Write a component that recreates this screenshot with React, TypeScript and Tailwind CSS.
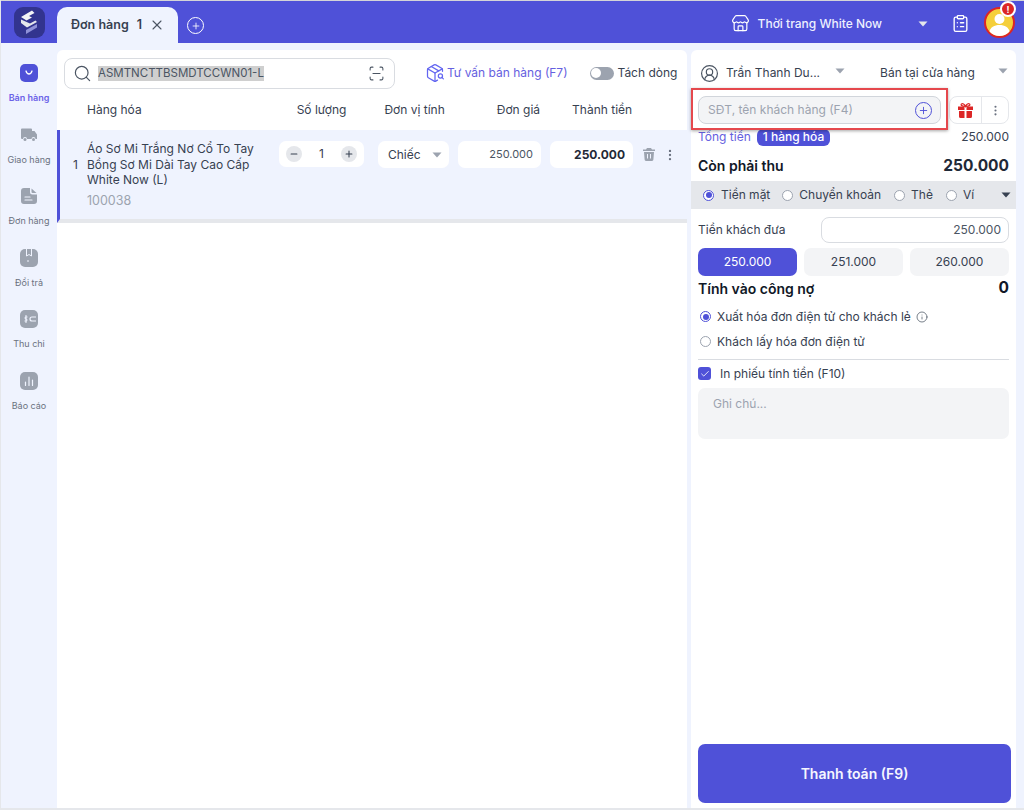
import { FC, ReactNode } from 'react';
import { Plus, X, Search, ScanLine, Minus, EllipsisVertical, Store, ClipboardList, CircleUserRound, PackageSearch, Info, Check } from 'lucide-react';

const Caret: FC<{ className?: string }> = ({ className }) => (
    <svg width="10" height="6" viewBox="0 0 10 6" className={className}>
        <path d="M0.5 0.5h9L5 5.5z" fill="currentColor" />
    </svg>
);

const Radio: FC<{ on?: boolean }> = ({ on }) => (
    <span className={`flex h-[11px] w-[11px] shrink-0 items-center justify-center rounded-full border bg-white ${on ? 'border-[#4f51d8]' : 'border-[#9ca3af]'}`}>
        {on && <span className="h-[6px] w-[6px] rounded-full bg-[#4f51d8]" />}
    </span>
);

const NavItem: FC<{ label: string; active?: boolean; children: ReactNode }> = ({ label, active, children }) => (
    <div className="flex h-[61.5px] flex-col items-center">
        <div className={`flex h-[18px] w-[18px] items-center justify-center rounded-[5px] ${active ? 'bg-[#4f51d8]' : 'bg-[#9ca3af]'}`}>
            {children}
        </div>
        <span className={`mt-[10px] text-[9px] leading-[12px] ${active ? 'font-semibold text-[#6b62e8]' : 'text-[#6b7280]'}`}>{label}</span>
    </div>
);

const Sidebar: FC = () => (
    <aside className="w-[56px] shrink-0 pt-[14px]">
        <NavItem label="Bán hàng" active>
            <svg width="10" height="6" viewBox="0 0 10 6"><path d="M2 1c.6 2 1.700 3 3 3s2.400-1 3-3" fill="none" stroke="#fff" strokeWidth="1.300" strokeLinecap="round" /></svg>
        </NavItem>
        <div className="flex h-[61.5px] flex-col items-center">
            <svg width="18" height="18" viewBox="0 0 18 18"><path d="M1 3.500a1 1 0 0 1 1-1h9a1 1 0 0 1 1 1V5h2.500L17 8.500V13h-1.500a2 2 0 0 0-4 0h-4.500a2 2 0 0 0-4 0H2a1 1 0 0 1-1-1z" fill="#9ca3af" /><circle cx="5" cy="13.500" r="1.500" fill="#9ca3af" /><circle cx="13.500" cy="13.500" r="1.500" fill="#9ca3af" /></svg>
            <span className="mt-[10px] text-[9px] leading-[12px] text-[#6b7280]">Giao hàng</span>
        </div>
        <div className="flex h-[61.5px] flex-col items-center">
            <svg width="18" height="18" viewBox="0 0 18 18"><path d="M4 1h6L10 5a2.500 2.500 0 0 0 2.500 2.500H17V14a3 3 0 0 1-3 3H4a3 3 0 0 1-3-3V4a3 3 0 0 1 3-3z" fill="#9ca3af" /><path d="M11.500 1.500L16.500 6h-4a1 1 0 0 1-1-1z" fill="#9ca3af" /><path d="M5 10h5M5 13h7" stroke="#eff3fe" strokeWidth="1.200" strokeLinecap="round" /></svg>
            <span className="mt-[10px] text-[9px] leading-[12px] text-[#6b7280]">Đơn hàng</span>
        </div>
        <NavItem label="Đổi trả">
            <svg width="18" height="18" viewBox="0 0 18 18"><path d="M6.500 0v7l2.500-1.500L11.500 7V0" fill="none" stroke="#eff3fe" strokeWidth="1" /><path d="M7 12h2" stroke="#eff3fe" strokeWidth="1.200" /></svg>
        </NavItem>
        <NavItem label="Thu chi">
            <svg width="18" height="18" viewBox="0 0 18 18"><path d="M6 5v8M7.500 7H5.200v2h1.600v2H4.500" fill="none" stroke="#eff3fe" strokeWidth="1" /><path d="M16 7h-4a2 2 0 0 0 0 4h4" fill="none" stroke="#eff3fe" strokeWidth="1.200" /></svg>
        </NavItem>
        <NavItem label="Báo cáo">
            <svg width="18" height="18" viewBox="0 0 18 18"><path d="M5.500 10v3.500M9 5v8.500M12.500 8v5.500" stroke="#eff3fe" strokeWidth="1.200" strokeLinecap="round" /></svg>
        </NavItem>
    </aside>
);

const Header: FC = () => (
    <header className="flex h-[43px] shrink-0 items-end border-t border-[#d4d4d8] bg-[#4f51d8]">
        <div className="flex h-[42px] w-[56px] shrink-0 items-center justify-center">
            <div className="flex h-[31px] w-[31px] items-center justify-center rounded-[9px] bg-[#32348f]">
                <svg width="20" height="26" viewBox="0 0 20 26">
                    <path d="M13 1.500L2 8l5.500 3.500 5.500-3-3-1.500L15.500 4z" fill="#f3f4f6" />
                    <path d="M2 10.500l9 4 5.500-3L18 13l-10 5.500L2 14z" fill="#e5e7eb" />
                    <path d="M18 15v3.500L7 25v-4z" fill="#8f91d8" />
                </svg>
            </div>
        </div>
        <div className="flex h-[36px] w-[121px] items-center rounded-t-[10px] bg-[#eff3fe] pl-[14px] text-[12.500px] font-semibold text-[#374151]">
            <span>Đơn hàng</span>
            <span className="ml-[8px]">1</span>
            <X size={16} strokeWidth={1.600} className="ml-[7px] text-[#4b5563]" />
        </div>
        <div className="mb-[9px] ml-[9px] flex h-[17px] w-[17px] items-center justify-center rounded-full border-[1.500px] border-white">
            <Plus size={10} strokeWidth={2} className="text-white" />
        </div>
        <div className="mb-[10px] ml-auto flex items-center text-white">
            <Store size={19} strokeWidth={1.500} />
            <span className="ml-[8px] text-[12px] font-medium leading-[16px] text-[#eef0ff]">Thời trang White Now</span>
            <Caret className="ml-[36px] text-[#e5e7eb]" />
            <ClipboardList size={19} strokeWidth={1.700} className="ml-[23px]" />
        </div>
        <div className="relative mb-[5px] ml-[14px] mr-[9px] flex h-[31px] w-[31px] items-center justify-center overflow-visible rounded-full border-2 border-[#dc2626] bg-[#f5cf3a]">
            <svg width="27" height="27" viewBox="0 0 27 27" className="rounded-full">
                <circle cx="13.500" cy="10" r="5" fill="#fff" />
                <path d="M3 24c1-6 5.500-8 10.500-8s9.500 2 10.500 8l-4 3H7z" fill="#fff" />
            </svg>
            <span className="absolute -right-[3px] -top-[8px] flex h-[16px] w-[16px] items-center justify-center rounded-full border-2 border-white bg-[#dc2626] text-[9px] font-bold leading-none text-white">!</span>
        </div>
    </header>
);

const OrderPanel: FC = () => (
    <main className="flex w-[630px] shrink-0 flex-col rounded-t-[6px] bg-white">
        <div className="flex h-[43px] items-center pl-[7px] pt-[3px]">
            <div className="flex h-[31px] w-[331px] items-center rounded-[8px] border border-[#d9dce1] pl-[8px] pr-[9px]">
                <Search size={19} strokeWidth={1.500} className="text-[#4b5563]" />
                <span className="ml-[6px] bg-[#cfcfcf] text-[11.500px] leading-[15px] text-[#4b5563]">ASMTNCTTBSMDTCCWN01-L</span>
                <ScanLine size={17} strokeWidth={1.500} className="ml-auto text-[#4b5563]" />
            </div>
            <PackageSearch size={20} strokeWidth={1.500} className="ml-[30px] text-[#6366f1]" />
            <span className="ml-[2px] text-[12px] text-[#6560e0]">Tư vấn bán hàng (F7)</span>
            <span className="ml-[22px] flex h-[13px] w-[24px] items-center rounded-full bg-[#9ca3af] pl-[1.500px]">
                <span className="h-[10px] w-[10px] rounded-full bg-white" />
            </span>
            <span className="ml-[4px] text-[12px] text-[#374151]">Tách dòng</span>
        </div>
        <div className="flex h-[37px] items-center pb-[3px] text-[12px] text-[#374151]">
            <span className="ml-[30px]">Hàng hóa</span>
            <span className="ml-[155px]">Số lượng</span>
            <span className="ml-[38px]">Đơn vị tính</span>
            <span className="ml-[52px]">Đơn giá</span>
            <span className="ml-[32px]">Thành tiền</span>
        </div>
        <div className="flex h-[93px] items-start border-b-4 border-l-[3px] border-b-[#e5e7eb] border-l-[#4f51d8] bg-[#eff3fe] pt-[11px]">
            <span className="mt-[15px] ml-[13px] w-[14px] text-[12px] text-[#374151]">1</span>
            <div className="w-[192px]">
                <p className="text-[12px] leading-[15.500px] text-[#374151]">Áo Sơ Mi Trắng Nơ Cổ To Tay<br />Bồng Sơ Mi Dài Tay Cao Cấp<br />White Now (L)</p>
                <p className="mt-[5px] text-[12.500px] leading-[16px] text-[#9ca3af]">100038</p>
            </div>
            <div className="flex h-[26px] w-[85px] items-center justify-between rounded-[7px] bg-white px-[7px] text-[12px] text-[#374151]">
                <span className="flex h-[16px] w-[16px] items-center justify-center rounded-full bg-[#e5e7eb]"><Minus size={10} strokeWidth={2.500} /></span>
                <span>1</span>
                <span className="flex h-[16px] w-[16px] items-center justify-center rounded-full bg-[#e5e7eb]"><Plus size={10} strokeWidth={2.500} /></span>
            </div>
            <div className="ml-[14px] flex h-[27px] w-[71px] items-center rounded-[7px] bg-white pl-[10px] pr-[7px] text-[12px] text-[#374151]">
                <span>Chiếc</span>
                <Caret className="ml-auto text-[#9ca3af]" />
            </div>
            <div className="ml-[9px] flex h-[27px] w-[83px] items-center justify-end rounded-[7px] bg-white pr-[8px] text-[11px] text-[#4b5563]">250.000</div>
            <div className="ml-[9px] flex h-[27px] w-[83px] items-center justify-end rounded-[7px] bg-white pr-[8px] text-[12px] font-bold text-[#1f2937]">250.000</div>
            <svg width="12" height="13" viewBox="0 0 12 13" className="ml-[10px] mt-[7px]">
                <path d="M4 0h4l1 1.500h3V3H0V1.500h3zM1 4h10l-.6 7.500A1.500 1.500 0 0 1 9 13H3a1.500 1.500 0 0 1-1.400-1.500z" fill="#9ca3af" />
                <path d="M4.500 6v4.500M7.500 6v4.500" stroke="#eff3fe" strokeWidth="1" />
            </svg>
            <EllipsisVertical size={14} strokeWidth={2} className="ml-[8px] mt-[7px] text-[#6b7280]" />
        </div>
    </main>
);

const PayPanel: FC = () => (
    <section className="relative ml-[4px] flex w-[325px] shrink-0 flex-col rounded-t-[6px] bg-white text-[12px] text-[#374151]">
        <div className="flex h-[40px] items-center pl-[9px] pr-[8px] pt-[6px]">
            <CircleUserRound size={19} strokeWidth={1.500} className="text-[#4b5563]" />
            <span className="ml-[7px]">Trần Thanh Du...</span>
            <Caret className="ml-[15px] -translate-y-[2px] text-[#9ca3af]" />
            <span className="ml-[35px]">Bán tại cửa hàng</span>
            <Caret className="ml-auto -translate-y-[2px] text-[#9ca3af]" />
        </div>
        <div className="flex h-[39px] items-center pl-[7px] pr-[7px] pt-[1px]">
            <div className="flex h-[28px] w-[243px] items-center rounded-[8px] border border-[#d1d5db] bg-[#f3f4f6] pl-[9px] pr-[8px] text-[#9ca3af]">
                <span>SĐT, tên khách hàng (F4)</span>
                <span className="ml-auto flex h-[17px] w-[17px] items-center justify-center rounded-full border-[1.500px] border-[#4f51d8]">
                    <Plus size={11} strokeWidth={2} className="text-[#4f51d8]" />
                </span>
            </div>
            <div className="ml-[8px] flex h-[28px] w-[60px] items-center rounded-[8px] border border-[#e5e7eb]">
                <span className="flex h-full w-[32px] items-center justify-center border-r border-[#e5e7eb]">
                    <svg width="15" height="15" viewBox="0 0 15 15">
                        <path d="M0 3.500h15v3.500H0zM1 8h13v5.500a1.500 1.500 0 0 1-1.500 1.500h-10A1.500 1.500 0 0 1 1 13.500z" fill="#dc2626" />
                        <path d="M6.500 3.500h2V15h-2z" fill="#fff" />
                        <path d="M7.500 3.500C6.500 1 4.500.2 3.500 1s-.2 2.500 4 2.500c4.200 0 5-1.700 4-2.500s-3 0-4 2.500z" fill="none" stroke="#dc2626" strokeWidth="1.200" />
                    </svg>
                </span>
                <span className="flex flex-1 justify-center"><EllipsisVertical size={13} strokeWidth={2} className="text-[#6b7280]" /></span>
            </div>
        </div>
        <div className="flex h-[16px] items-center pl-[7px] pr-[7px]">
            <span className="text-[#6560e0]">Tổng tiền</span>
            <span className="ml-[6px] flex h-[17px] items-center rounded-[6px] bg-[#4f51d8] px-[6px] font-medium text-white">1 hàng hóa</span>
            <span className="ml-auto">250.000</span>
        </div>
        <div className="flex h-[36px] items-center pl-[7px] pr-[7px] pt-[5px]">
            <span className="text-[14px] font-semibold text-[#111827]">Còn phải thu</span>
            <span className="ml-auto text-[15.500px] font-bold text-[#1f2937]">250.000</span>
        </div>
        <div className="flex h-[28px] items-center bg-[#e5e7eb] pl-[12px] pr-[5px]">
            <Radio on />
            <span className="ml-[7px]">Tiền mặt</span>
            <span className="ml-[12px] flex items-center"><Radio /><span className="ml-[6px]">Chuyển khoản</span></span>
            <span className="ml-[13px] flex items-center"><Radio /><span className="ml-[6px]">Thẻ</span></span>
            <span className="ml-[13px] flex items-center"><Radio /><span className="ml-[6px]">Ví</span></span>
            <Caret className="ml-auto text-[#374151]" />
        </div>
        <div className="flex items-center pl-[7px] pr-[7px] pt-[8px]">
            <span>Tiền khách đưa</span>
            <div className="ml-auto flex h-[26px] w-[188px] items-center justify-end rounded-[8px] border border-[#d9dce1] pr-[7px] text-[#4b5563]">250.000</div>
        </div>
        <div className="flex gap-[7px] pl-[7px] pr-[7px] pt-[5px]">
            <div className="flex h-[28px] flex-1 items-center justify-center rounded-[7px] bg-[#4f51d8] text-white">250.000</div>
            <div className="flex h-[28px] flex-1 items-center justify-center rounded-[7px] bg-[#f3f4f6]">251.000</div>
            <div className="flex h-[28px] flex-1 items-center justify-center rounded-[7px] bg-[#f3f4f6]">260.000</div>
        </div>
        <div className="flex h-[24px] items-center pl-[7px] pr-[7px]">
            <span className="text-[14px] font-semibold text-[#111827]">Tính vào công nợ</span>
            <span className="ml-auto text-[15.500px] font-bold text-[#111827]">0</span>
        </div>
        <div className="mt-[4px] flex h-[25px] items-center pl-[9px]">
            <Radio on />
            <span className="ml-[6px]">Xuất hóa đơn điện tử cho khách lẻ</span>
            <Info size={12} strokeWidth={1.500} className="ml-[5px] text-[#4b5563]" />
        </div>
        <div className="flex h-[25px] items-center pl-[9px]">
            <Radio />
            <span className="ml-[6px]">Khách lấy hóa đơn điện tử</span>
        </div>
        <div className="mx-[7px] mt-[5px] border-t border-[#d9dce1]" />
        <div className="flex h-[27px] items-center pl-[7px]">
            <span className="flex h-[13px] w-[13px] items-center justify-center rounded-[3px] bg-[#4f51d8]"><Check size={10} strokeWidth={2} className="text-white" /></span>
            <span className="ml-[9px]">In phiếu tính tiền (F10)</span>
        </div>
        <div className="ml-[7px] mr-[7px] mt-[1px] h-[51px] rounded-[7px] bg-[#f3f4f6] pl-[15px] pt-[7px] text-[#9ca3af]">Ghi chú...</div>
        <div className="ml-[7px] mr-[5px] mb-[5px] mt-auto flex h-[59px] items-center justify-center rounded-[7px] bg-[#4f51d8] text-[14px] font-semibold text-[#f5f6ff]">Thanh toán (F9)</div>
        <div className="pointer-events-none absolute left-0 top-[38px] h-[42px] w-[257px] border-[2px] border-[#e5484d] shadow-[0_1px_3px_rgba(0,0,0,0.35)]" />
    </section>
);

export default function App() {
    return (
        <div className="flex h-[810px] w-[1024px] flex-col overflow-hidden border-l border-[#e5e7eb] bg-[#eff3fe] font-['Inter',sans-serif]">
            <Header />
            <div className="flex flex-1 pt-[7px]">
                <Sidebar />
                <OrderPanel />
                <PayPanel />
            </div>
            <div className="h-[2px] shrink-0 bg-[#e5e7eb]" />
        </div>
    );
}
